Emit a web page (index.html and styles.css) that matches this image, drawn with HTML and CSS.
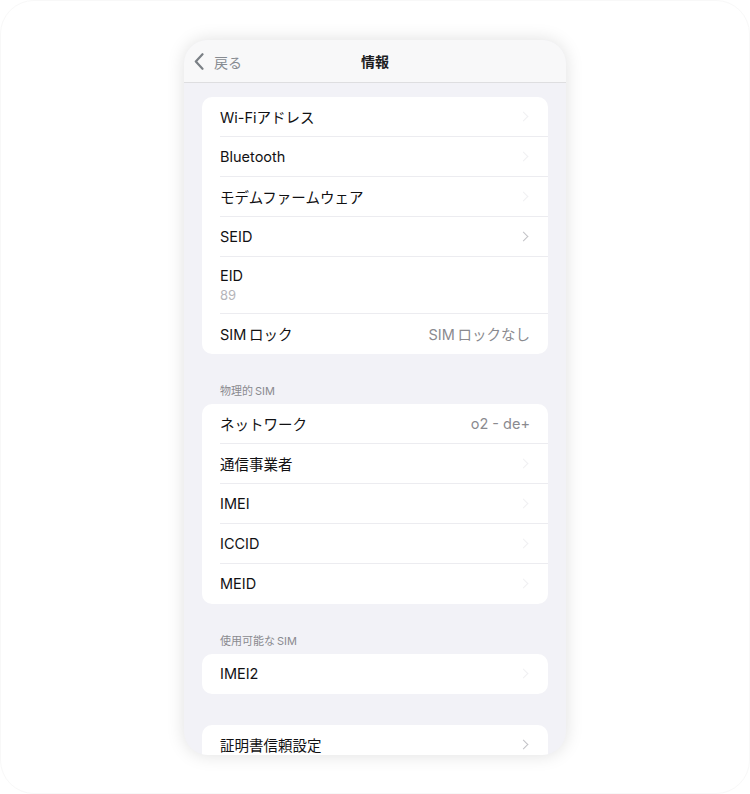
FILE: index.html
```html
<!DOCTYPE html>
<html lang="ja">
<head>
  <meta charset="UTF-8" />
  <meta name="viewport" content="width=device-width, initial-scale=1.0"/>
  <title>情報</title>
  <link rel="stylesheet" href="styles.css">
</head>
<body>

<div class="frame">
  <div class="phone">

    <!-- Navigation bar -->
    <div class="navbar">
      <div class="back">
        <svg width="10" height="17" viewBox="0 0 10 17"><path d="M8.5 1.2 L1.8 8.5 L8.5 15.8" fill="none" stroke="#7b8086" stroke-width="2.2" stroke-linecap="round" stroke-linejoin="round"/></svg>
        <span>戻る</span>
      </div>
      <div class="nav-title">情報</div>
    </div>

    <div class="content">

      <!-- Device identifiers -->
      <div class="card">
        <div class="row"><span class="label">Wi-Fiアドレス</span><span class="chev faint"></span></div>
        <div class="row"><span class="label">Bluetooth</span><span class="chev faint"></span></div>
        <div class="row"><span class="label">モデムファームウェア</span><span class="chev faint"></span></div>
        <div class="row"><span class="label">SEID</span><span class="chev"></span></div>
        <div class="row tall">
          <div class="stack">
            <span class="label">EID</span>
            <span class="sub">89</span>
          </div>
        </div>
        <div class="row"><span class="label">SIM&thinsp;ロック</span><span class="value">SIM&thinsp;ロックなし</span></div>
      </div>

      <div class="section-title">物理的&thinsp;SIM</div>
      <div class="card">
        <div class="row"><span class="label">ネットワーク</span><span class="value">o2 - de+</span></div>
        <div class="row"><span class="label">通信事業者</span><span class="chev faint"></span></div>
        <div class="row"><span class="label">IMEI</span><span class="chev faint"></span></div>
        <div class="row"><span class="label">ICCID</span><span class="chev faint"></span></div>
        <div class="row"><span class="label">MEID</span><span class="chev faint"></span></div>
      </div>

      <div class="section-title">使用可能な&thinsp;SIM</div>
      <div class="card">
        <div class="row"><span class="label">IMEI2</span><span class="chev faint"></span></div>
      </div>

      <div class="card spaced">
        <div class="row"><span class="label">証明書信頼設定</span><span class="chev"></span></div>
      </div>

    </div>
  </div>
</div>

</body>
</html>
```

FILE: styles.css
```css
body {
  margin: 0;
  padding: 0;
  background: #ffffff;
  font-family: Inter, "Noto Sans CJK JP", sans-serif;
  color: #111113;
}
.frame {
  width: 748px;
  height: 792px;
  border: 1px solid #f8f8f8;
  border-radius: 34px;
  display: flex;
  align-items: center;
  justify-content: center;
}
.phone {
  width: 382px;
  height: 715px;
  border-radius: 24px;
  overflow: hidden;
  background: #f2f2f7;
  box-shadow: 0 0 18px rgba(0,0,0,0.13);
  display: flex;
  flex-direction: column;
}
.navbar {
  height: 42px;
  flex-shrink: 0;
  background: #f8f8f9;
  border-bottom: 1px solid #dedee0;
  position: relative;
  display: flex;
  align-items: center;
  justify-content: center;
}
.back {
  position: absolute;
  left: 10px;
  top: 12px;
  display: flex;
  align-items: center;
  gap: 10px;
  color: #878b91;
  font-size: 14px;
}
.nav-title {
  font-size: 14px;
  font-weight: 700;
  color: #1c1c1e;
}
.content {
  padding: 14px 18px 0;
}
.card {
  background: #ffffff;
  border-radius: 10px;
  overflow: hidden;
}
.card.spaced {
  margin-top: 31px;
}
.row {
  height: 40px;
  box-sizing: border-box;
  margin-left: 18px;
  padding-right: 18px;
  display: flex;
  align-items: center;
  justify-content: space-between;
  border-bottom: 1px solid #ececf0;
}
.row:last-child {
  border-bottom: none;
}
.row.tall {
  height: 57px;
}
.stack {
  display: flex;
  flex-direction: column;
  gap: 3px;
}
.label {
  font-size: 14.5px;
}
.sub {
  font-size: 13px;
  color: #b5b5b9;
}
.value {
  font-size: 14.5px;
  color: #8a8a8f;
}
.chev {
  width: 6px;
  height: 6px;
  border-top: 1.5px solid #c2c2c6;
  border-right: 1.5px solid #c2c2c6;
  transform: rotate(45deg);
  margin-right: 3px;
}
.chev.faint {
  border-color: #f0f0f2;
}
.section-title {
  font-size: 11px;
  color: #8a8a8f;
  padding: 30px 18px 6px;
  line-height: 14px;
}
```
